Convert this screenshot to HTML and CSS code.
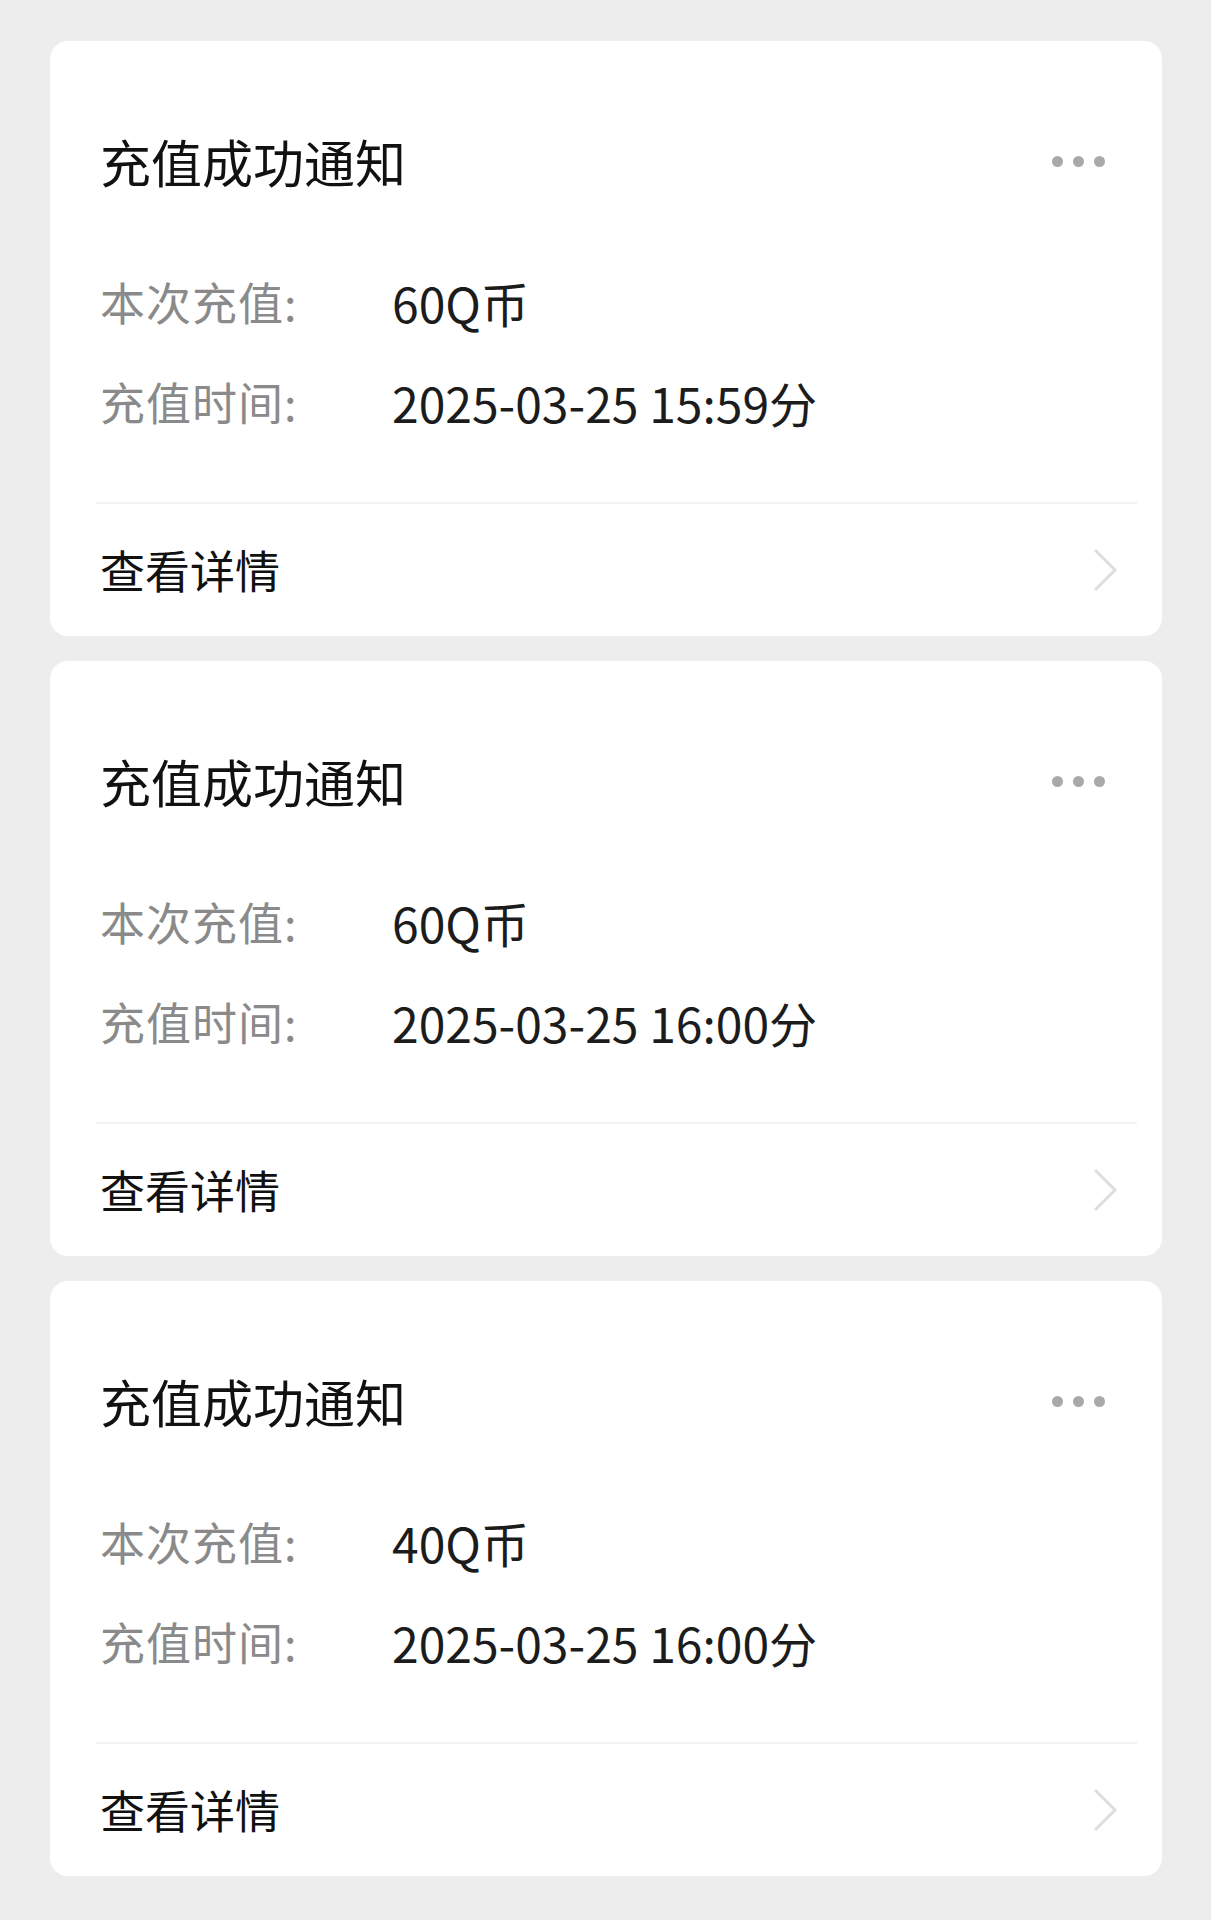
FILE: index.html
```html
<!DOCTYPE html>
<html lang="zh-CN">
<head>
  <meta charset="UTF-8" />
  <meta name="viewport" content="width=device-width, initial-scale=1.0" />
  <title>充值成功通知</title>
  <link rel="stylesheet" href="styles.css">
</head>
<body>
  <div class="list">
    <div class="card">
      <div class="card-head">
        <h2>充值成功通知</h2>
        <span class="more"><i></i><i></i><i></i></span>
      </div>
      <div class="card-body">
        <div class="row"><span class="label">本次充值:</span><span class="value">60Q币</span></div>
        <div class="row"><span class="label">充值时间:</span><span class="value">2025-03-25 15:59分</span></div>
      </div>
      <div class="card-foot">
        <span>查看详情</span>
        <svg class="arrow" width="26" height="44" viewBox="0 0 26 44"><path d="M3 2 L23 22 L3 42" fill="none" stroke="#dedede" stroke-width="3"/></svg>
      </div>
    </div>

    <div class="card">
      <div class="card-head">
        <h2>充值成功通知</h2>
        <span class="more"><i></i><i></i><i></i></span>
      </div>
      <div class="card-body">
        <div class="row"><span class="label">本次充值:</span><span class="value">60Q币</span></div>
        <div class="row"><span class="label">充值时间:</span><span class="value">2025-03-25 16:00分</span></div>
      </div>
      <div class="card-foot">
        <span>查看详情</span>
        <svg class="arrow" width="26" height="44" viewBox="0 0 26 44"><path d="M3 2 L23 22 L3 42" fill="none" stroke="#dedede" stroke-width="3"/></svg>
      </div>
    </div>

    <div class="card">
      <div class="card-head">
        <h2>充值成功通知</h2>
        <span class="more"><i></i><i></i><i></i></span>
      </div>
      <div class="card-body">
        <div class="row"><span class="label">本次充值:</span><span class="value">40Q币</span></div>
        <div class="row"><span class="label">充值时间:</span><span class="value">2025-03-25 16:00分</span></div>
      </div>
      <div class="card-foot">
        <span>查看详情</span>
        <svg class="arrow" width="26" height="44" viewBox="0 0 26 44"><path d="M3 2 L23 22 L3 42" fill="none" stroke="#dedede" stroke-width="3"/></svg>
      </div>
    </div>
  </div>
</body>
</html>
```

FILE: styles.css
```css
body {
  margin: 0;
  background-color: #ededed;
  font-family: "Noto Sans CJK SC", "Noto Sans", sans-serif;
  color: #1a1a1a;
}
.list {
  display: flex;
  flex-direction: column;
  gap: 25px;
  padding: 41px 49px 0 50px;
}
.card {
  background: #fff;
  border-radius: 18px;
  height: 595px;
  box-sizing: border-box;
}
.card-head {
  display: flex;
  align-items: center;
  justify-content: space-between;
  padding: 85px 57px 0 50px;
  height: 70px;
}
.card-head h2 {
  margin: 0;
  font-size: 51px;
  font-weight: 400;
  line-height: 70px;
  color: #111;
}
.more {
  display: flex;
  gap: 10px;
}
.more i {
  width: 11px;
  height: 11px;
  border-radius: 50%;
  background: #a9a9a9;
}
.card-body {
  padding: 56px 50px 50px 4px;
  border-bottom: 2px solid #f2f2f2;
  margin: 0 25px 0 46px;
}
.row {
  display: flex;
  line-height: 100px;
  font-size: 45px;
}
.label {
  width: 292px;
  color: #8a8a8a;
  letter-spacing: 1px;
}
.value {
  color: #1c1c1c;
  font-size: 48px;
}
.card-foot {
  display: flex;
  align-items: center;
  justify-content: space-between;
  height: 131px;
  padding: 0 44px 0 50px;
  font-size: 45px;
  color: #111;
}
.arrow {
  display: block;
}
```
